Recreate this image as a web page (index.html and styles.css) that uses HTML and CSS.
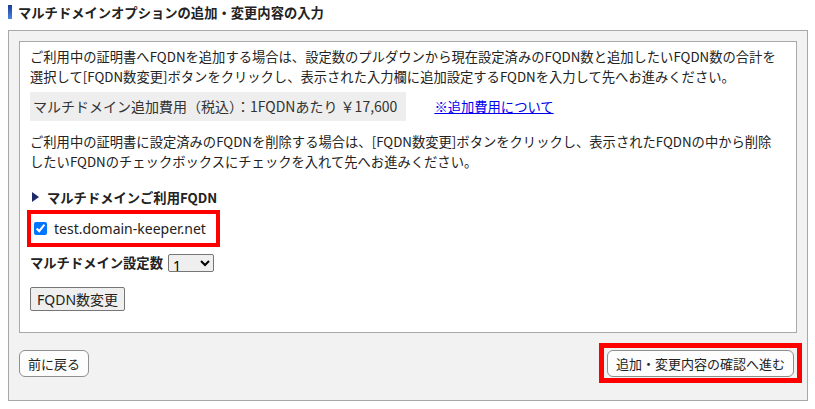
FILE: index.html
```html
<!DOCTYPE html>
<html lang="ja">

<head>
    <meta charset="UTF-8">
    <meta name="viewport" content="width=device-width, initial-scale=1.0">
    <title>マルチドメインオプション</title>
    <link rel="stylesheet" href="styles.css">
</head>

<body>

    <div class="page">
        <h2 class="heading">マルチドメインオプションの追加・変更内容の入力</h2>

        <div class="panel">
            <div class="panel-body">
                <p class="note">ご利用中の証明書へFQDNを追加する場合は、設定数のプルダウンから現在設定済みのFQDN数と追加したいFQDN数の合計を選択して[FQDN数変更]ボタンをクリックし、表示された入力欄に追加設定するFQDNを入力して先へお進みください。</p>

                <div class="fee-row">
                    <span class="fee">マルチドメイン追加費用（税込）：1FQDNあたり ￥17,600</span>
                    <a class="fee-link" href="#">※追加費用について</a>
                </div>

                <p class="note note-delete">ご利用中の証明書に設定済みのFQDNを削除する場合は、[FQDN数変更]ボタンをクリックし、表示されたFQDNの中から削除したいFQDNのチェックボックスにチェックを入れて先へお進みください。</p>

                <h3 class="sub-title">マルチドメインご利用FQDN</h3>

                <label class="fqdn-item">
                    <input type="checkbox" checked>
                    <span>test.domain-keeper.net</span>
                </label>

                <div class="count-row">
                    <span class="count-label">マルチドメイン設定数</span>
                    <select class="count-select">
                        <option>1</option>
                        <option>2</option>
                        <option>3</option>
                    </select>
                </div>

                <button class="btn-change">FQDN数変更</button>
            </div>

            <div class="actions">
                <button class="btn-nav">前に戻る</button>
                <span class="highlight">
                    <button class="btn-nav">追加・変更内容の確認へ進む</button>
                </span>
            </div>
        </div>
    </div>

</body>

</html>
```

FILE: styles.css
```css
* {
    margin: 0;
    padding: 0;
    box-sizing: border-box;
}

body {
    background-color: #fff;
    color: #222;
    font-family: "Noto Sans CJK JP", sans-serif;
    font-size: 13.3px;
}

.page {
    padding: 2px 7px 0 8px;
}

.heading {
    display: flex;
    align-items: center;
    height: 20px;
    margin-bottom: 8px;
    font-size: 13.3px;
    font-weight: bold;
    color: #222;
}

.heading::before {
    content: "";
    width: 4px;
    height: 14px;
    margin-right: 6px;
    background: linear-gradient(#183c94, #4a86e0);
}

.panel {
    border: 1px solid #a8a8a8;
    background-color: #f2f2f2;
    padding: 10px 10px 17px 10px;
}

.panel-body {
    border: 1px solid #a8a8a8;
    background-color: #fff;
    padding: 5px 12px 21px 10px;
}

.note {
    line-height: 20px;
}

.note-delete {
    margin-top: 11px;
}

.fee-row {
    display: flex;
    align-items: center;
    margin-top: 5px;
}

.fee {
    background-color: #eee;
    color: #333;
    height: 29px;
    line-height: 29px;
    padding: 0 9px 0 3px;
    font-size: 14px;
}

.fee-link {
    margin-left: 28px;
    color: #0000ee;
}

.sub-title {
    display: flex;
    align-items: center;
    margin-top: 15px;
    height: 20px;
    font-size: 13.3px;
    font-weight: bold;
}

.sub-title::before {
    content: "";
    margin: 0 8px 0 2px;
    border-left: 7px solid #1f2a6b;
    border-top: 5px solid transparent;
    border-bottom: 5px solid transparent;
}

.fqdn-item {
    display: inline-flex;
    align-items: center;
    height: 37px;
    margin: 3px 0 0 -3px;
    padding-right: 10px;
    border: 4px solid #f00;
    font-family: "Noto Sans", sans-serif;
    font-size: 14px;
}

.fqdn-item input {
    width: 13px;
    height: 13px;
    margin: 0 7px 0 3px;
}

.count-row {
    display: flex;
    align-items: center;
    margin-top: 6px;
}

.count-label {
    font-size: 13.3px;
    font-weight: bold;
    margin-right: 5px;
}

.count-select {
    width: 46px;
    height: 18px;
    font-family: "Noto Sans", sans-serif;
    font-size: 14px;
    border: 1px solid #767676;
    border-radius: 2px;
}

.btn-change {
    display: block;
    margin-top: 15px;
    height: 24px;
    padding: 0 6px;
    font-family: "Noto Sans", "Noto Sans CJK JP", sans-serif;
    font-size: 14px;
    color: #222;
    background-color: #efefef;
    border: 1px solid #767676;
    border-radius: 2px;
}

.actions {
    display: flex;
    justify-content: space-between;
    align-items: center;
    margin-top: 10px;
}

.highlight {
    display: flex;
    margin-right: -5px;
    padding: 2px 3px 1px 3px;
    border: 5px solid #f00;
}

.btn-nav {
    height: 27px;
    padding: 0 8px;
    font-family: "Noto Sans CJK JP", sans-serif;
    font-size: 13px;
    color: #222;
    background-color: #fdfdfd;
    border: 1px solid #8f8f8f;
    border-radius: 6px;
}
```
